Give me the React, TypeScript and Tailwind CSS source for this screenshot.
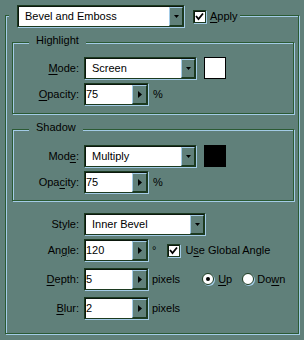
import type { ReactNode } from 'react';

const field = 'border border-[#1c3a20] shadow-[inset_1px_1px_0_#0b170d,1px_1px_0_#a3cbe6]';
const frame = 'border border-[#2b5a33] shadow-[inset_1px_1px_0_#a3cbe6,1px_1px_0_#a3cbe6]';
const btn = 'border border-t-[#a3cbe6] border-l-[#a3cbe6] border-r-[#1c3a20] border-b-[#1c3a20] bg-[#60807a] flex items-center justify-center';

function Dropdown({ value, w }: { value: string; w: string }) {
  return (
    <div className={`${field} ${w} h-[22px] flex bg-white`}>
      <div className="flex-1 pl-[7px] flex items-center leading-[13px] mt-[1px]">{value}</div>
      <div className={`${btn} w-[14px] mt-[1px]`}>
        <svg width="5" height="3" viewBox="0 0 5 3">
          <polygon points="0,0 5,0 2.5,3" fill="#000" />
        </svg>
      </div>
    </div>
  );
}

function Spin({ value }: { value: string }) {
  return (
    <div className={`${field} w-[64px] h-[22px] flex bg-white`}>
      <div className="flex-1 pl-[1px] flex items-center leading-[13px] mt-[1px]">{value}</div>
      <div className={`${btn} w-[15px] mt-[1px]`}>
        <svg width="4" height="7" viewBox="0 0 4 7">
          <polygon points="0,0 4,3.5 0,7" fill="#000" />
        </svg>
      </div>
    </div>
  );
}

function Check() {
  return (
    <div className={`${field} w-[13px] h-[13px] bg-white flex items-center justify-center`}>
      <svg width="9" height="9" viewBox="0 0 9 9">
        <polyline points="1,4 3.5,7 8,1.5" fill="none" stroke="#000" strokeWidth="1.8" />
      </svg>
    </div>
  );
}

function Radio({ on }: { on?: boolean }) {
  return (
    <div className="w-[12px] h-[12px] rounded-full bg-white border border-[#1c3a20] shadow-[1px_1px_0_#a3cbe6] flex items-center justify-center">
      {on && <div className="w-[4px] h-[4px] rounded-full bg-black" />}
    </div>
  );
}

function Row({ label, lw, children, className = '' }: { label: ReactNode; lw: string; children: ReactNode; className?: string }) {
  return (
    <div className={`flex items-center h-[22px] ${className}`}>
      <div className={`${lw} text-right`}>{label}</div>
      <div className="ml-[5px] flex items-center">{children}</div>
    </div>
  );
}

function Group({ title, className = '', children }: { title: string; className?: string; children: ReactNode }) {
  return (
    <div className={`${frame} relative w-[282px] h-[72px] ${className}`}>
      <div className="absolute left-[16px] top-[-9px] px-[7px] bg-[#60807a] leading-[13px]">{title}</div>
      {children}
    </div>
  );
}

const u = 'underline decoration-1 underline-offset-[2px]';

export default function App() {
  return (
    <div className="w-[304px] h-[340px] bg-[#60807a] overflow-hidden pt-[15px] pl-[5px] text-[11px] leading-[13px] text-black font-['Liberation_Sans',Arial,sans-serif]">
      <div className={`${frame} relative w-[294px] h-[319px] pt-[26px] pl-[6px]`}>
        <div className="absolute left-[3px] top-[-11px] flex items-center bg-[#60807a] pl-[8px] pr-[2px]">
          <Dropdown value="Bevel and Emboss" w="w-[167px]" />
          <div className="ml-[9px]"><Check /></div>
          <span className="ml-[4px]"><span className={u}>A</span>pply</span>
        </div>

        <Group title="Highlight" className="pt-[14px]">
          <Row lw="w-[66px]" label={<><span className={u}>M</span>ode:</>}>
            <Dropdown value="Screen" w="w-[112px]" />
            <div className="ml-[8px] w-[22px] h-[22px] bg-white border border-black" />
          </Row>
          <Row lw="w-[66px]" className="mt-[4px]" label={<><span className={u}>O</span>pacity:</>}>
            <Spin value="75" />
            <span className="ml-[5px]">%</span>
          </Row>
        </Group>

        <Group title="Shadow" className="mt-[15px] pt-[15px]">
          <Row lw="w-[66px]" label={<>Mod<span className={u}>e</span>:</>}>
            <Dropdown value="Multiply" w="w-[112px]" />
            <div className="ml-[8px] w-[22px] h-[22px] bg-black border border-black" />
          </Row>
          <Row lw="w-[66px]" className="mt-[4px]" label={<>Opa<span className={u}>c</span>ity:</>}>
            <Spin value="75" />
            <span className="ml-[5px]">%</span>
          </Row>
        </Group>

        <Row lw="w-[67px]" className="mt-[12px]" label="Style:">
          <Dropdown value="Inner Bevel" w="w-[121px]" />
        </Row>
        <Row lw="w-[67px]" className="mt-[4px]" label={<>An<span className={u}>g</span>le:</>}>
          <Spin value="120" />
          <span className="ml-[4px]">°</span>
          <div className="ml-[11px]"><Check /></div>
          <span className="ml-[5px]">U<span className={u}>s</span>e Global Angle</span>
        </Row>
        <Row lw="w-[67px]" className="mt-[7px]" label={<><span className={u}>D</span>epth:</>}>
          <Spin value="5" />
          <span className="ml-[4px]">pixels</span>
          <div className="ml-[22px]"><Radio on /></div>
          <span className="ml-[4px]"><span className={u}>U</span>p</span>
          <div className="ml-[10px]"><Radio /></div>
          <span className="ml-[3px]">Do<span className={u}>w</span>n</span>
        </Row>
        <Row lw="w-[67px]" className="mt-[7px]" label={<><span className={u}>B</span>lur:</>}>
          <Spin value="2" />
          <span className="ml-[4px]">pixels</span>
        </Row>
      </div>
    </div>
  );
}
